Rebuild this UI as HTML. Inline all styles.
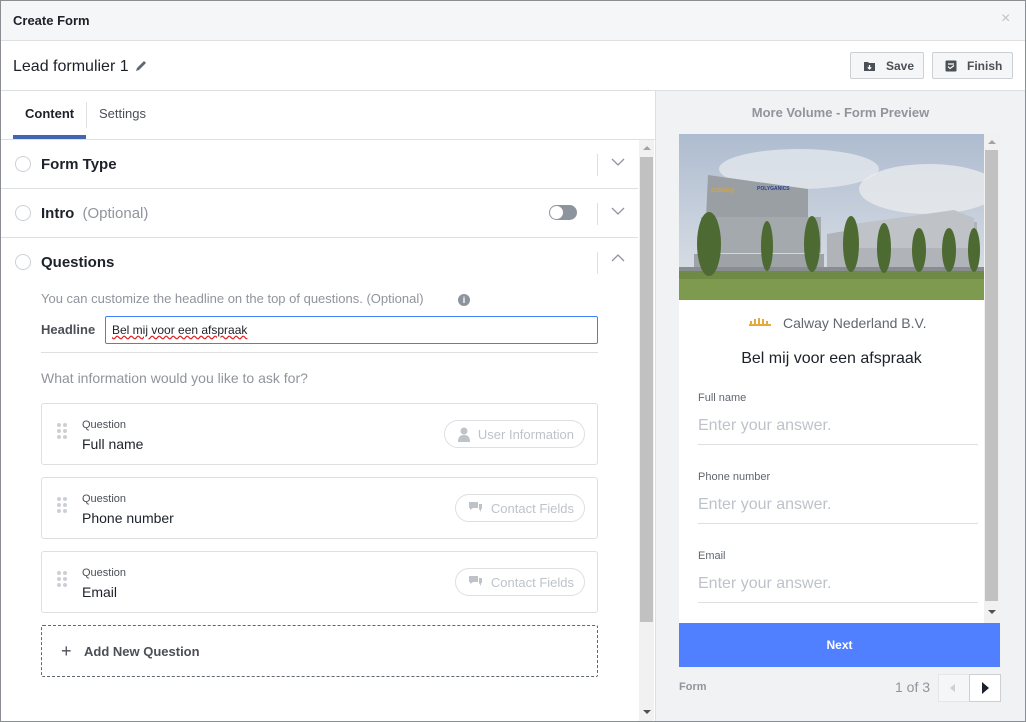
<!DOCTYPE html>
<html><head><meta charset="utf-8"><style>
*{box-sizing:border-box;margin:0;padding:0}
body{width:1026px;height:722px;overflow:hidden;font-family:"Liberation Sans",Arial,sans-serif;background:#fff;position:relative;color:#1d2129}
.abs{position:absolute}
.frame{position:absolute;left:0;top:0;width:1026px;height:722px;border:1px solid #8a8d91;pointer-events:none;z-index:50}
.title{left:0;top:0;width:1026px;height:41px;background:#f5f6f7;border-bottom:1px solid #dddfe2}
.btn{position:absolute;top:52px;height:27px;border:1px solid #ccd0d5;background:#f5f6f7;border-radius:2px;font-size:12px;font-weight:bold;color:#4b4f56;display:flex;align-items:center;padding-left:12px}
.sec{position:absolute;left:0;width:638px;height:49px;border-bottom:1px solid #dddfe2}
.radio{position:absolute;left:15px;top:16px;width:16px;height:16px;border:1px solid #ccd0d5;border-radius:50%}
.sec .lbl{position:absolute;left:41px;top:16px;font-size:15px;font-weight:bold;color:#1d2129}
.vsep{position:absolute;left:597px;top:14px;width:1px;height:22px;background:#dddfe2}
.chev{position:absolute;left:611px;top:18px}
.q{position:absolute;left:41px;width:557px;height:62px;border:1px solid #dddfe2;border-radius:3px}
.q .dots{position:absolute;left:15px;top:19px}
.q .s{position:absolute;left:40px;top:15px;font-size:11px;color:#4b4f56}
.q .n{position:absolute;left:40px;top:32px;font-size:14px;color:#1d2129}
.pill{position:absolute;top:16px;right:12px;height:28px;border:1px solid #dddfe2;border-radius:14px;font-size:13px;color:#bec3c9;display:flex;align-items:center;padding:0 10px 0 12px;gap:7px}
.fl{position:absolute;left:698px;font-size:11px;color:#606770}
.fi{position:absolute;left:698px;width:280px;font-size:16px;color:#bec3c9;border-bottom:1px solid #dddfe2;height:28px}
</style></head><body>
<div class="frame"></div>
<div class="abs title"></div>
<div class="abs" style="left:13px;top:13px;font-size:13px;font-weight:bold;color:#1d2129">Create Form</div>
<div class="abs" style="left:1001px;top:10px;font-size:16px;color:#bec3c9">×</div>
<div class="abs" style="left:0;top:90px;width:1026px;height:1px;background:#dddfe2"></div>
<div class="abs" style="left:13px;top:58px;font-size:16px;color:#1d2129">Lead formulier 1</div>
<svg class="abs" style="left:134px;top:59px" width="14" height="14" viewBox="0 0 14 14"><path d="M2 12l1-3 7-7 2 2-7 7z" fill="#606770"/></svg>
<div class="btn" style="left:850px;width:74px"><svg width="13" height="12" viewBox="0 0 13 12"><path d="M1 2h4l1 1h6v8H1z" fill="#4b4f56"/><path d="M6.5 5v4M4.8 7.3l1.7 1.7 1.7-1.7" stroke="#fff" stroke-width="1.3" fill="none"/></svg><span style="margin-left:10px">Save</span></div>
<div class="btn" style="left:932px;width:81px"><svg width="12" height="12" viewBox="0 0 12 12"><rect x="0.5" y="0.5" width="11" height="11" rx="1" fill="#4b4f56"/><path d="M3 4h6M3 6.5l2 2 4-3" stroke="#fff" stroke-width="1.2" fill="none"/></svg><span style="margin-left:10px">Finish</span></div>

<div class="abs" style="left:25px;top:106px;font-size:13px;font-weight:bold;color:#1d2129">Content</div>
<div class="abs" style="left:86px;top:102px;width:1px;height:26px;background:#dddfe2"></div>
<div class="abs" style="left:99px;top:106px;font-size:13px;color:#4b4f56">Settings</div>
<div class="abs" style="left:13px;top:135px;width:73px;height:4px;background:#4267b2"></div>
<div class="abs" style="left:0;top:139px;width:655px;height:1px;background:#dddfe2"></div>

<div class="abs" style="left:639px;top:140px;width:15px;height:582px;background:#f1f1f1"></div>
<div class="abs" style="left:640px;top:157px;width:13px;height:465px;background:#c1c1c1"></div>
<div class="abs" style="left:643px;top:146px;width:0;height:0;border:4px solid transparent;border-bottom-color:#a3a3a3;border-top:0"></div>
<div class="abs" style="left:643px;top:710px;width:0;height:0;border:4px solid transparent;border-top-color:#505050;border-bottom:0"></div>

<div class="sec" style="top:140px"><div class="radio"></div><div class="lbl">Form Type</div><div class="vsep"></div><svg class="chev" width="14" height="9"><path d="M1 1l6 6 6-6" stroke="#90949c" fill="none" stroke-width="1.3"/></svg></div>
<div class="sec" style="top:189px"><div class="radio"></div><div class="lbl">Intro <span style="font-weight:normal;color:#90949c;margin-left:4px">(Optional)</span></div>
<div style="position:absolute;left:549px;top:16px;width:28px;height:15px;border-radius:8px;background:#8d949e"></div><div style="position:absolute;left:550px;top:17px;width:13px;height:13px;border-radius:50%;background:#fff"></div>
<div class="vsep"></div><svg class="chev" width="14" height="9"><path d="M1 1l6 6 6-6" stroke="#90949c" fill="none" stroke-width="1.3"/></svg></div>
<div class="sec" style="top:238px;border:none"><div class="radio"></div><div class="lbl">Questions</div><div class="vsep"></div><svg class="chev" style="top:15px" width="14" height="9"><path d="M1 8l6-6 6 6" stroke="#90949c" fill="none" stroke-width="1.3"/></svg></div>

<div class="abs" style="left:41px;top:291px;font-size:13px;color:#90949c">You can customize the headline on the top of questions. (Optional)</div>
<div class="abs" style="left:458px;top:294px;width:12px;height:12px;border-radius:50%;background:#8d949e;color:#fff;font-size:9px;font-weight:bold;text-align:center;line-height:12px">i</div>
<div class="abs" style="left:41px;top:322px;font-size:13px;font-weight:bold;color:#4b4f56">Headline</div>
<div class="abs" style="left:105px;top:316px;width:493px;height:28px;border:1px solid #4080ff;border-radius:2px;font-size:12px;padding:6px 0 0 6px;color:#1d2129"><span style="text-decoration:underline wavy #e02020">Bel mij voor een afspraak</span></div>
<div class="abs" style="left:41px;top:352px;width:557px;height:1px;background:#dddfe2"></div>
<div class="abs" style="left:41px;top:370px;font-size:14px;color:#90949c">What information would you like to ask for?</div>

<svg width="0" height="0" style="position:absolute"><defs><g id="dots" fill="#ccd0d5"><circle cx="2" cy="2" r="2"/><circle cx="8" cy="2" r="2"/><circle cx="2" cy="8" r="2"/><circle cx="8" cy="8" r="2"/><circle cx="2" cy="14" r="2"/><circle cx="8" cy="14" r="2"/></g></defs></svg>
<div class="q" style="top:403px"><svg class="dots" width="10" height="16"><use href="#dots"/></svg><div class="s">Question</div><div class="n">Full name</div>
<div class="pill"><svg width="14" height="15"><circle cx="7" cy="4" r="3.5" fill="#bec3c9"/><path d="M1 15c0-5 2-7 6-7s6 2 6 7z" fill="#bec3c9"/></svg>User Information</div></div>
<div class="q" style="top:477px"><svg class="dots" width="10" height="16"><use href="#dots"/></svg><div class="s">Question</div><div class="n">Phone number</div>
<div class="pill"><svg width="16" height="16"><path d="M1 2h9v6H5l-3 2V8H1z" fill="#bec3c9"/><path d="M6 9h5l2 3V9h1V4h-3v5" fill="#bec3c9"/></svg>Contact Fields</div></div>
<div class="q" style="top:551px"><svg class="dots" width="10" height="16"><use href="#dots"/></svg><div class="s">Question</div><div class="n">Email</div>
<div class="pill"><svg width="16" height="16"><path d="M1 2h9v6H5l-3 2V8H1z" fill="#bec3c9"/><path d="M6 9h5l2 3V9h1V4h-3v5" fill="#bec3c9"/></svg>Contact Fields</div></div>
<div class="abs" style="left:41px;top:625px;width:557px;height:52px;border:1px dashed #606770;border-radius:2px"></div>
<div class="abs" style="left:61px;top:641px;font-size:18px;color:#4b4f56">+</div>
<div class="abs" style="left:84px;top:644px;font-size:13px;font-weight:bold;color:#4b4f56">Add New Question</div>

<div class="abs" style="left:655px;top:91px;width:371px;height:631px;background:#f1f2f4;border-left:1px solid #dddfe2"></div>
<div class="abs" style="left:655px;top:105px;width:371px;text-align:center;font-size:13px;font-weight:bold;color:#90949c">More Volume - Form Preview</div>
<div class="abs" style="left:679px;top:134px;width:321px;height:489px;background:#fff"></div>
<div class="abs" style="left:984px;top:134px;width:16px;height:489px;background:#f1f1f1"></div>
<div class="abs" style="left:985px;top:150px;width:13px;height:451px;background:#c1c1c1"></div>
<div class="abs" style="left:988px;top:140px;border:4px solid transparent;border-bottom-color:#a3a3a3;border-top:0"></div>
<div class="abs" style="left:988px;top:610px;border:4px solid transparent;border-top-color:#505050;border-bottom:0"></div>

<svg class="abs" style="left:679px;top:134px" width="305" height="166" viewBox="0 0 305 166">
<defs><linearGradient id="sky" x1="0" y1="0" x2="0" y2="1"><stop offset="0" stop-color="#aebcd0"/><stop offset="1" stop-color="#dfe3e8"/></linearGradient></defs>
<rect width="305" height="166" fill="url(#sky)"/>
<ellipse cx="120" cy="35" rx="80" ry="20" fill="#e3e7ec" opacity=".8"/><ellipse cx="250" cy="55" rx="70" ry="25" fill="#e8ebee" opacity=".8"/>
<path d="M27 83l2-42 100 14v30z" fill="#9a9fa4"/>
<path d="M22 83h120v36H22z" fill="#a4a9ae"/>
<path d="M15 120h130v20H15z" fill="#9ea3a8"/>
<text x="32" y="58" font-size="7" fill="#d9a23a" font-family="Liberation Sans" font-weight="bold">calway</text>
<text x="78" y="56" font-size="5" fill="#2a3f8f" font-family="Liberation Sans" font-weight="bold">POLYGANICS</text>
<path d="M148 125v-25l70-12h80v45H148z" fill="#b0b4b8"/>
<path d="M175 90l100-14 20 8v30H175z" fill="#bfc3c7"/>
<rect x="0" y="136" width="305" height="30" fill="#6f8a45"/>
<rect x="0" y="145" width="305" height="21" fill="#7d9a4e"/>
<rect x="0" y="133" width="305" height="4" fill="#8a8d90"/>
<g fill="#4d6a32"><ellipse cx="30" cy="110" rx="12" ry="32"/><ellipse cx="88" cy="112" rx="6" ry="25"/><ellipse cx="133" cy="110" rx="8" ry="28"/><ellipse cx="172" cy="110" rx="8" ry="28"/><ellipse cx="205" cy="114" rx="7" ry="25"/><ellipse cx="240" cy="116" rx="7" ry="22"/><ellipse cx="270" cy="116" rx="7" ry="22"/><ellipse cx="295" cy="116" rx="6" ry="22"/></g>
</svg>

<svg class="abs" style="left:749px;top:316px" width="24" height="12"><g fill="#e8a93a"><rect x="1" y="5" width="2" height="4"/><rect x="5" y="3" width="2" height="6"/><rect x="9" y="2" width="2" height="7"/><rect x="13" y="3" width="2" height="6"/><rect x="17" y="5" width="2" height="4"/><rect x="0" y="8" width="22" height="2"/></g></svg>
<div class="abs" style="left:783px;top:315px;font-size:14px;color:#606770">Calway Nederland B.V.</div>
<div class="abs" style="left:679px;top:350px;width:305px;text-align:center;font-size:16px;color:#1d2129">Bel mij voor een afspraak</div>
<div class="fl" style="top:392px">Full name</div>
<div class="fi" style="top:417px">Enter your answer.</div>
<div class="fl" style="top:471px">Phone number</div>
<div class="fi" style="top:496px">Enter your answer.</div>
<div class="fl" style="top:550px">Email</div>
<div class="fi" style="top:575px">Enter your answer.</div>

<div class="abs" style="left:679px;top:623px;width:321px;height:44px;background:#5080ff;color:#fff;font-size:12px;font-weight:bold;text-align:center;line-height:44px">Next</div>
<div class="abs" style="left:679px;top:681px;font-size:11px;font-weight:bold;color:#90949c">Form</div>
<div class="abs" style="left:895px;top:679px;font-size:14px;color:#90949c">1 of 3</div>
<div class="abs" style="left:938px;top:674px;width:32px;height:28px;border:1px solid #e5e6e9;background:#f5f6f7"></div>
<div class="abs" style="left:950px;top:684px;border:4px solid transparent;border-right:5px solid #ccd0d5;border-left:0"></div>
<div class="abs" style="left:969px;top:674px;width:32px;height:28px;border:1px solid #ccd0d5;background:#fff"></div>
<div class="abs" style="left:982px;top:682px;border:6px solid transparent;border-left:7px solid #1d2129;border-right:0"></div>
</body></html>
